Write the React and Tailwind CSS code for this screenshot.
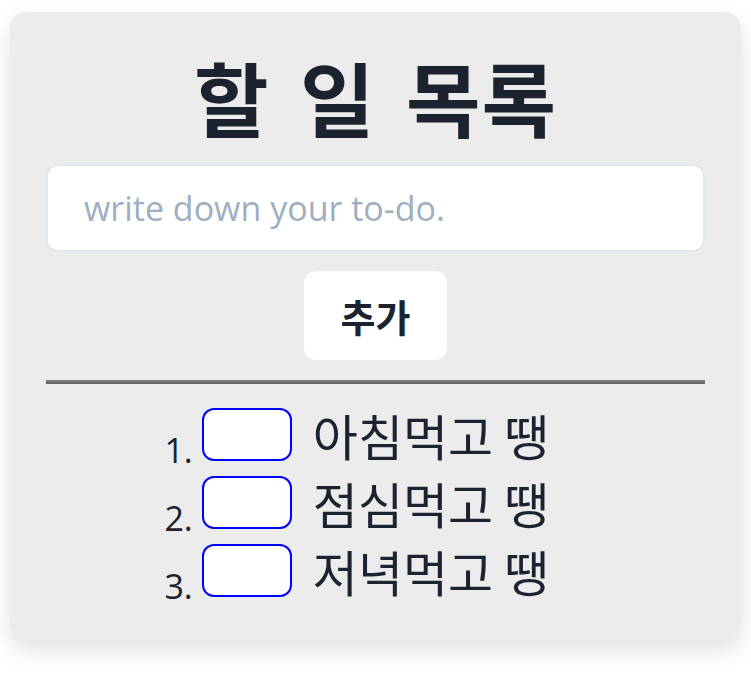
import { useState } from 'react'

const kr = '"Noto Sans CJK KR", "Noto Sans", sans-serif'
const latin = '"Open Sans", "Noto Sans CJK KR", sans-serif'

export default function App() {
  const [todos] = useState(['아침먹고 땡', '점심먹고 땡', '저녁먹고 땡'])

  return (
    <div className="min-h-screen bg-white px-[10px] pt-3" style={{ fontFamily: kr }}>
      <div className="h-[628px] rounded-2xl bg-[#ececec] px-9 shadow-[0_10px_25px_rgba(0,0,0,0.12)] flex flex-col items-center">
        <h1 className="mt-[43px] text-[81px] font-bold leading-none tracking-[1px] [word-spacing:11px] text-[#1b2230]">할 일 목록</h1>

        <input
          className="mt-[28px] h-[88px] w-full rounded-xl border-2 border-[#e2e8f0] bg-white px-9 text-[34px] text-[#1b2230] outline-none placeholder:text-[#a0aec0]"
          style={{ fontFamily: latin }}
          placeholder="write down your to-do."
        />

        <button className="mt-[19px] h-[89px] w-[143px] rounded-xl bg-white text-[38px] font-bold text-[#1b2230]">
          추가
        </button>

        <div className="mt-[20px] w-full border-t-2 border-b-2 border-t-[#7c7c7c] border-b-[#666666]" />

        <ol className="mt-[16px] flex flex-col">
          {todos.map((t, i) => (
            <li key={t} className="flex h-[68px] items-center justify-center">
              <span
                className="-ml-[47px] mb-[1px] w-[47px] self-end pr-[9px] text-right text-[34px] leading-none text-[#1b2230]"
                style={{ fontFamily: latin }}
              >
                {i + 1}.
              </span>
              <span className="h-[53px] w-[90px] rounded-xl border-2 border-[#0000ff] bg-white" />
              <span className="ml-[21px] text-[49px] leading-none text-[#1b2230]">{t}</span>
            </li>
          ))}
        </ol>
      </div>
    </div>
  )
}
